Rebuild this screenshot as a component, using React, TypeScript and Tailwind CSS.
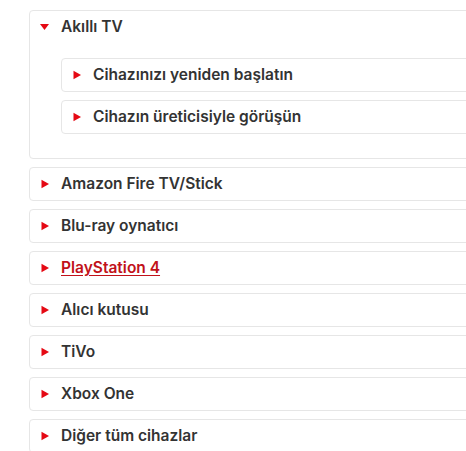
import React from "react";

const Right = () => (
  <svg width="8" height="10" viewBox="0 0 8 10" className="shrink-0">
    <polygon points="0.5,0.8 8,5 0.5,9.2" fill="#e50914" />
  </svg>
);

const Down = () => (
  <svg width="9" height="8" viewBox="0 0 9 8" className="shrink-0">
    <polygon points="0,1 9,1 4.5,7" fill="#e50914" />
  </svg>
);

const Row = ({ label, link }: { label: string; link?: boolean }) => (
  <div className="border border-[#e6e6e6] rounded-[4px] bg-white">
    <div className="flex items-center h-[32px] pl-[11px]">
      <Right />
      <span
        className={
          "ml-[12px] text-[15.5px] font-semibold " +
          (link ? "text-[#c11119] underline underline-offset-2" : "text-[#333333]")
        }
      >
        {label}
      </span>
    </div>
  </div>
);

export default function App() {
  return (
    <div
      className="w-[466px] h-[451px] overflow-hidden bg-white"
      style={{ fontFamily: "Inter, 'Noto Sans', sans-serif" }}
    >
      <div className="ml-[29px] mt-[10px] w-[520px] flex flex-col gap-[8px]">
        <div className="border border-[#e6e6e6] rounded-[4px] bg-white pb-[24px]">
          <div className="flex items-center h-[32px] pl-[10px]">
            <Down />
            <span className="ml-[12px] text-[15.5px] font-semibold text-[#333333]">Akıllı TV</span>
          </div>
          <div className="mt-[15px] ml-[31px] flex flex-col gap-[8px]">
            <Row label="Cihazınızı yeniden başlatın" />
            <Row label="Cihazın üreticisiyle görüşün" />
          </div>
        </div>
        <Row label="Amazon Fire TV/Stick" />
        <Row label="Blu-ray oynatıcı" />
        <Row label="PlayStation 4" link />
        <Row label="Alıcı kutusu" />
        <Row label="TiVo" />
        <Row label="Xbox One" />
        <Row label="Diğer tüm cihazlar" />
      </div>
    </div>
  );
}
